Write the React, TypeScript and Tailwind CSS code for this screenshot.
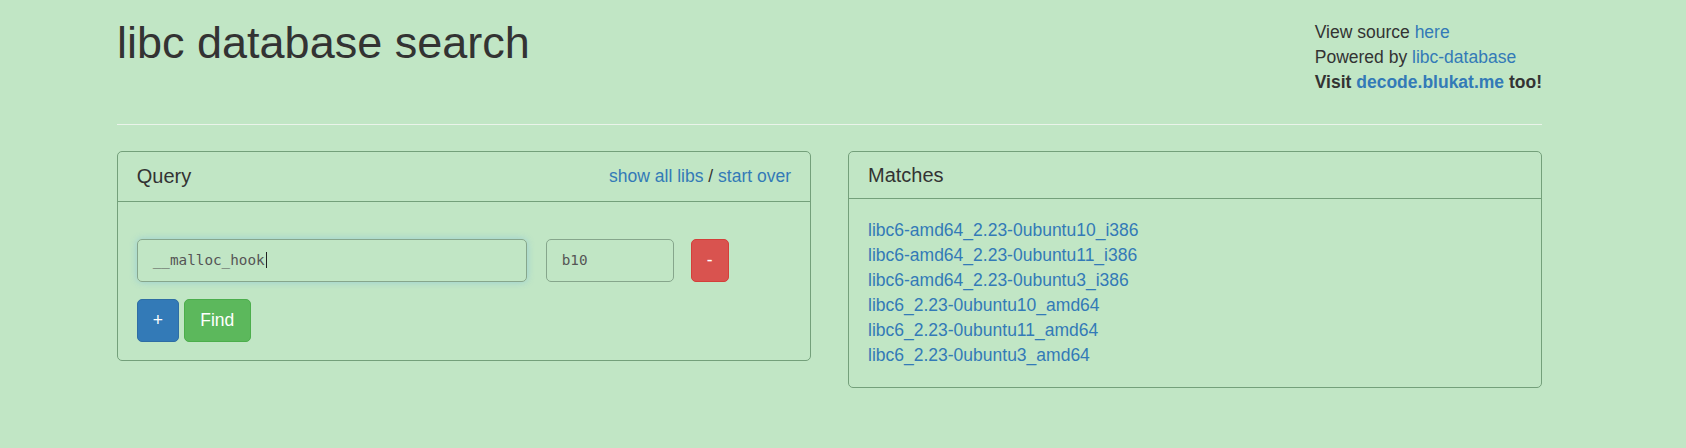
import React from 'react'

const matches = [
  'libc6-amd64_2.23-0ubuntu10_i386',
  'libc6-amd64_2.23-0ubuntu11_i386',
  'libc6-amd64_2.23-0ubuntu3_i386',
  'libc6_2.23-0ubuntu10_amd64',
  'libc6_2.23-0ubuntu11_amd64',
  'libc6_2.23-0ubuntu3_amd64',
]

function Header() {
  return (
    <div className="flex h-[124px] items-start justify-between">
      <h1 className="pt-[18px] text-[45px] leading-[49.5px] font-normal text-[#333]">
        libc database search
      </h1>
      <div className="pt-[20px] text-[17.5px] leading-[25px] text-[#333]">
        <div>
          View source <a className="text-[#337ab7]">here</a>
        </div>
        <div>
          Powered by <a className="text-[#337ab7]">libc-database</a>
        </div>
        <div className="font-bold">
          Visit <a className="text-[#337ab7]">decode.blukat.me</a> too!
        </div>
      </div>
    </div>
  )
}

function QueryPanel() {
  return (
    <div className="rounded-[5px] border border-[#74a07b]">
      {/* heading */}
      <div className="flex items-start justify-between border-b border-[#74a07b] px-[18.75px] py-[12px]">
        <div className="text-[20px] leading-[25px] text-[#333]">Query</div>
        <div className="text-[17.5px] leading-[25px] text-[#333]">
          <a className="text-[#337ab7]">show all libs</a> / <a className="text-[#337ab7]">start over</a>
        </div>
      </div>

      {/* body */}
      <div className="px-[18.75px] pt-[37px] pb-[18.75px]">
        <div className="flex items-center">
          <div className="flex h-[42.5px] w-[390px] items-center rounded-[5px] border border-[#86a68c] px-[15px] font-['DejaVu_Sans_Mono',monospace] text-[14.3px] text-[#555] shadow-[0_0_7px_rgba(102,175,233,0.45)]">
            __malloc_hook
            <span className="ml-[1px] inline-block h-[16px] w-[1px] bg-[#222]" />
          </div>
          <div className="ml-[19px] flex h-[42.5px] w-[128px] items-center rounded-[5px] border border-[#86a68c] px-[15px] font-['DejaVu_Sans_Mono',monospace] text-[14.3px] text-[#555]">
            b10
          </div>
          <button className="ml-[17px] h-[42.5px] w-[38px] rounded-[5px] border border-[#d43f3a] bg-[#d9534f] text-[17.5px] leading-[25px] text-white">
            -
          </button>
        </div>
        <div className="mt-[17.5px] flex items-center gap-[5px]">
          <button className="h-[42.5px] w-[42px] rounded-[5px] border border-[#2e6da4] bg-[#337ab7] text-[17.5px] leading-[25px] text-white">
            +
          </button>
          <button className="h-[42.5px] w-[67px] rounded-[5px] border border-[#4cae4c] bg-[#5cb85c] text-[17.5px] leading-[25px] text-white">
            Find
          </button>
        </div>
      </div>
    </div>
  )
}

function MatchesPanel() {
  return (
    <div className="rounded-[5px] border border-[#74a07b]">
      <div className="border-b border-[#74a07b] px-[18.75px] py-[12px]">
        <div className="text-[20px] leading-[22px] text-[#333]">Matches</div>
      </div>
      <div className="p-[18.75px] text-[17.5px] leading-[25px]">
        {matches.map((m) => (
          <div key={m}>
            <a className="text-[#337ab7]">{m}</a>
          </div>
        ))}
      </div>
    </div>
  )
}

export default function App() {
  return (
    <div className="min-h-screen bg-[#c1e6c5] pl-[117px] font-['Liberation_Sans',Arial,sans-serif]">
      <div className="w-[1425px]">
        <Header />
        <hr className="border-0 border-t border-[#eaf4ea]" />
        <div className="mt-[26px] grid grid-cols-[693.75px_693.75px] items-start gap-x-[37.5px]">
          <QueryPanel />
          <MatchesPanel />
        </div>
      </div>
    </div>
  )
}
